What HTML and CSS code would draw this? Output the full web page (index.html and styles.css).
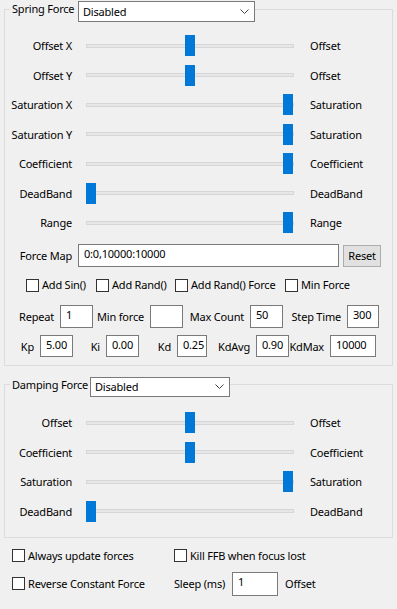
FILE: index.html
```html
<!DOCTYPE html>
<html lang="en">
<head>
  <meta charset="UTF-8">
  <meta name="viewport" content="width=device-width, initial-scale=1.0">
  <title>Force Feedback Settings</title>
  <link rel="stylesheet" href="styles.css">
</head>
<body>
  <div class="group spring">
    <div class="group-head">
      <span class="group-title">Spring Force</span>
      <div class="combo spring-combo">
        <span>Disabled</span>
        <svg class="chevron" width="9" height="5" viewBox="0 0 9 5"><polyline points="0.5,0.5 4.5,4.5 8.5,0.5" fill="none" stroke="#444" stroke-width="1"/></svg>
      </div>
    </div>

    <div class="sliders">
      <div class="slider-row">
        <span class="slider-label">Offset X</span>
        <div class="slider"><div class="groove"></div><div class="thumb" style="--pos: 0.5"></div></div>
        <span class="slider-caption">Offset</span>
      </div>
      <div class="slider-row">
        <span class="slider-label">Offset Y</span>
        <div class="slider"><div class="groove"></div><div class="thumb" style="--pos: 0.5"></div></div>
        <span class="slider-caption">Offset</span>
      </div>
      <div class="slider-row">
        <span class="slider-label">Saturation X</span>
        <div class="slider"><div class="groove"></div><div class="thumb" style="--pos: 1"></div></div>
        <span class="slider-caption">Saturation</span>
      </div>
      <div class="slider-row">
        <span class="slider-label">Saturation Y</span>
        <div class="slider"><div class="groove"></div><div class="thumb" style="--pos: 1"></div></div>
        <span class="slider-caption">Saturation</span>
      </div>
      <div class="slider-row">
        <span class="slider-label">Coefficient</span>
        <div class="slider"><div class="groove"></div><div class="thumb" style="--pos: 1"></div></div>
        <span class="slider-caption">Coefficient</span>
      </div>
      <div class="slider-row">
        <span class="slider-label">DeadBand</span>
        <div class="slider"><div class="groove"></div><div class="thumb" style="--pos: 0"></div></div>
        <span class="slider-caption">DeadBand</span>
      </div>
      <div class="slider-row">
        <span class="slider-label">Range</span>
        <div class="slider"><div class="groove"></div><div class="thumb" style="--pos: 1"></div></div>
        <span class="slider-caption">Range</span>
      </div>
    </div>

    <div class="map-row">
      <span class="slider-label">Force Map</span>
      <input class="edit map-edit" type="text" value="0:0,10000:10000">
      <button class="btn">Reset</button>
    </div>

    <div class="check-row">
      <label class="check"><input type="checkbox">Add Sin()</label>
      <label class="check"><input type="checkbox">Add Rand()</label>
      <label class="check"><input type="checkbox">Add Rand() Force</label>
      <label class="check"><input type="checkbox">Min Force</label>
    </div>

    <div class="field-row repeat-row">
      <span class="field-label">Repeat</span>
      <input class="edit" type="text" value="1">
      <span class="field-label">Min force</span>
      <input class="edit" type="text" value="">
      <span class="field-label">Max Count</span>
      <input class="edit" type="text" value="50">
      <span class="field-label">Step Time</span>
      <input class="edit" type="text" value="300">
    </div>

    <div class="field-row pid-row">
      <span class="field-label">Kp</span>
      <input class="edit" type="text" value="5.00">
      <span class="field-label">Ki</span>
      <input class="edit" type="text" value="0.00">
      <span class="field-label">Kd</span>
      <input class="edit" type="text" value="0.25">
      <span class="field-label">KdAvg</span>
      <input class="edit" type="text" value="0.90">
      <span class="field-label">KdMax</span>
      <input class="edit" type="text" value="10000">
    </div>
  </div>

  <div class="group damping">
    <div class="group-head">
      <span class="group-title">Damping Force</span>
      <div class="combo damping-combo">
        <span>Disabled</span>
        <svg class="chevron" width="9" height="5" viewBox="0 0 9 5"><polyline points="0.5,0.5 4.5,4.5 8.5,0.5" fill="none" stroke="#444" stroke-width="1"/></svg>
      </div>
    </div>

    <div class="sliders damping-sliders">
      <div class="slider-row">
        <span class="slider-label">Offset</span>
        <div class="slider"><div class="groove"></div><div class="thumb" style="--pos: 0.5"></div></div>
        <span class="slider-caption">Offset</span>
      </div>
      <div class="slider-row">
        <span class="slider-label">Coefficient</span>
        <div class="slider"><div class="groove"></div><div class="thumb" style="--pos: 0.5"></div></div>
        <span class="slider-caption">Coefficient</span>
      </div>
      <div class="slider-row">
        <span class="slider-label">Saturation</span>
        <div class="slider"><div class="groove"></div><div class="thumb" style="--pos: 1"></div></div>
        <span class="slider-caption">Saturation</span>
      </div>
      <div class="slider-row">
        <span class="slider-label">DeadBand</span>
        <div class="slider"><div class="groove"></div><div class="thumb" style="--pos: 0"></div></div>
        <span class="slider-caption">DeadBand</span>
      </div>
    </div>
  </div>

  <div class="options">
    <label class="check"><input type="checkbox">Always update forces</label>
    <label class="check"><input type="checkbox">Kill FFB when focus lost</label>
    <label class="check"><input type="checkbox">Reverse Constant Force</label>
    <div class="sleep">
      <span>Sleep (ms)</span>
      <input class="edit sleep-edit" type="text" value="1">
      <span>Offset</span>
    </div>
  </div>
</body>
</html>
```

FILE: styles.css
```css
body {
  margin: 0;
  background-color: #f0f0f0;
  font-family: "Noto Sans", "Open Sans", sans-serif;
  font-size: 11px;
  letter-spacing: -0.2px;
  color: #000;
}
input, button {
  font-family: inherit;
  font-size: 11px;
  letter-spacing: inherit;
  color: #000;
}

/* group boxes */
.group {
  border: 1px solid #dcdcdc;
  margin: 0 4px;
}
.spring {
  margin-top: 9px;
  padding-bottom: 8px;
}
.damping {
  margin-top: 18px;
  padding-bottom: 15px;
}
.group-head {
  display: flex;
  align-items: flex-start;
  height: 21px;
  padding-left: 5px;
  margin-top: -9px;
}
.damping .group-head {
  margin-top: -8px;
}
.group-title {
  background-color: #f0f0f0;
  padding-left: 2px;
  line-height: 16px;
  width: 66px;
  white-space: nowrap;
}
.damping .group-title {
  width: 78px;
}
.combo {
  display: flex;
  align-items: center;
  justify-content: space-between;
  box-sizing: border-box;
  height: 21px;
  background-color: #fff;
  border: 1px solid #7a7a7a;
  padding: 0 5px 1px 4px;
}
.spring-combo {
  width: 177px;
}
.damping-combo {
  width: 140px;
  height: 20px;
}

/* trackbars */
.sliders {
  display: flex;
  flex-direction: column;
  gap: 8.5px;
  padding-top: 13px;
}
.damping-sliders {
  padding-top: 14px;
}
.slider-row {
  display: flex;
  align-items: center;
  height: 21px;
}
.slider-label {
  width: 67px;
  text-align: right;
  white-space: nowrap;
}
.slider {
  position: relative;
  width: 208px;
  height: 21px;
  margin-left: 14px;
  display: flex;
  align-items: center;
}
.groove {
  width: 100%;
  height: 2px;
  background-color: #e7e7e7;
  border: 1px solid #d6d6d6;
}
.thumb {
  position: absolute;
  top: 0;
  left: calc(var(--pos) * (100% - 11px));
  width: 10px;
  height: 21px;
  background-color: #0078d7;
}
.slider-caption {
  margin-left: 16px;
}

/* edits and buttons */
.edit {
  box-sizing: border-box;
  height: 23px;
  border: 1px solid #7a7a7a;
  background-color: #fff;
  padding: 0 0 4px 5px;
  margin: 0;
  min-width: 0;
  outline: none;
}
.map-row {
  display: flex;
  align-items: center;
  margin-top: 11px;
}
.map-edit {
  width: 261px;
  margin-left: 6px;
}
.btn {
  box-sizing: border-box;
  width: 38px;
  height: 22px;
  margin-left: 4px;
  padding: 0;
  background-color: #e1e1e1;
  border: 1px solid #adadad;
}

/* checkboxes */
.check {
  display: flex;
  align-items: center;
  gap: 3px;
  line-height: 16px;
  white-space: nowrap;
}
.check input {
  appearance: none;
  box-sizing: border-box;
  width: 13px;
  height: 13px;
  margin: 0;
  border: 1px solid #333;
  background-color: #fff;
}
.check-row {
  display: grid;
  grid-template-columns: 70px 79px 110px auto;
  padding-left: 21px;
  margin-top: 10px;
}

/* numeric fields */
.field-row {
  display: grid;
  align-items: center;
}
.field-label {
  text-align: right;
  padding-right: 6px;
  white-space: nowrap;
}
.repeat-row {
  grid-template-columns: 55px 33px 57px 33px 67px 33px 64px 32px;
  margin-top: 12px;
}
.pid-row {
  grid-template-columns: 35px 33px 33px 33px 38px 30px 49px 33px 41px 46px;
  margin-top: 7px;
}
.pid-row .edit {
  height: 22px;
}

/* bottom options */
.options {
  display: grid;
  grid-template-columns: 162px auto;
  row-gap: 8px;
  align-items: center;
  padding-left: 12px;
  margin-top: 10px;
}
.sleep {
  display: flex;
  align-items: center;
  gap: 7px;
}
.sleep-edit {
  width: 46px;
  height: 24px;
}
```
